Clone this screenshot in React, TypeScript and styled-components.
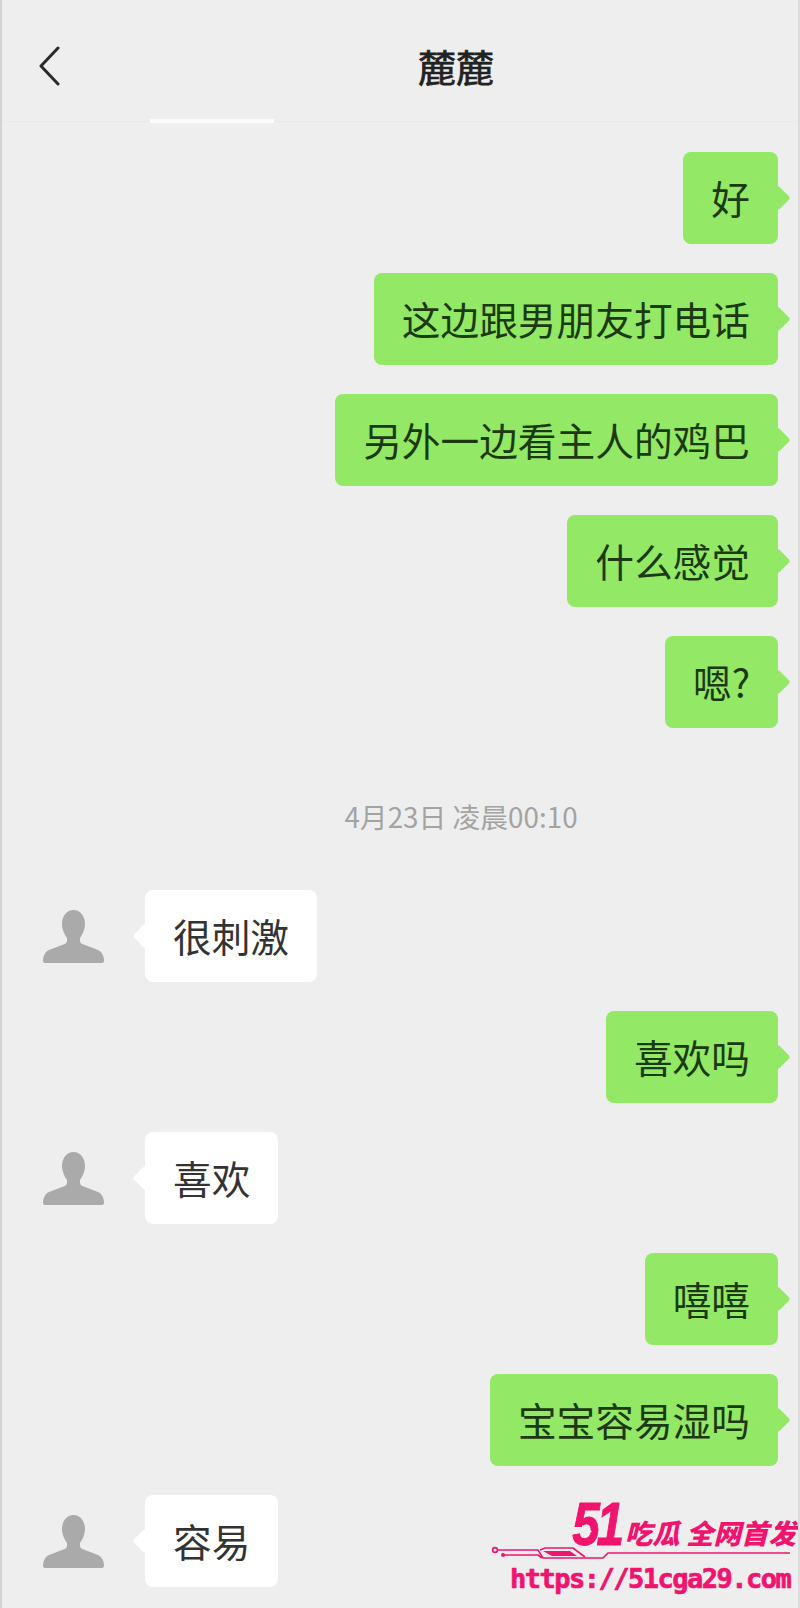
import React from 'react';
import styled, { createGlobalStyle } from 'styled-components';

const Global = createGlobalStyle`
  html, body {
    margin: 0;
    padding: 0;
    background: #eeeeee;
  }
`;

const Phone = styled.div`
  position: relative;
  width: 800px;
  height: 1608px;
  box-sizing: border-box;
  overflow: hidden;
  background: #eeeeee;
  border-left: 2px solid #d2d2d2;
  border-right: 2px solid #dcdcdc;
  font-family: "Noto Sans CJK SC", "Liberation Sans", sans-serif;
`;

const Header = styled.header`
  position: relative;
  display: flex;
  align-items: center;
  height: 122px;
  box-sizing: border-box;
  padding: 16px 0 0 36px;
  border-bottom: 1px solid #e9e9e9;
`;

const Back = styled.svg`
  width: 22px;
  height: 40px;
  margin-top: -5px;
`;

const Title = styled.h1`
  margin: -6px 0 0 358px;
  font-size: 38px;
  font-weight: 400;
  line-height: 50px;
  color: #222222;
  -webkit-text-stroke: 0.7px #222222;
`;

const Highlight = styled.span`
  position: absolute;
  left: 148px;
  bottom: -2px;
  width: 124px;
  height: 4px;
  background: #fbfbfb;
`;

const Chat = styled.main`
  display: flex;
  flex-direction: column;
  gap: 29px;
  padding-top: 30px;
`;

const Row = styled.div<{ $mine?: boolean }>`
  display: flex;
  align-items: center;
  justify-content: ${(p) => (p.$mine ? 'flex-end' : 'flex-start')};
  padding: ${(p) => (p.$mine ? '0 20px 0 0' : '0 0 0 41px')};
`;

const Avatar = styled.svg`
  width: 61px;
  height: 53px;
  margin: 20px 41px 0 0;
  align-self: flex-start;
  color: #aaaaaa;
`;

const Bubble = styled.div<{ $mine?: boolean }>`
  position: relative;
  display: flex;
  align-items: center;
  height: 92px;
  box-sizing: border-box;
  padding: 0 28px 3px;
  border-radius: 8px;
  font-size: 38.7px;
  white-space: nowrap;
  color: ${(p) => (p.$mine ? '#1c3a12' : '#333333')};
  background: ${(p) => (p.$mine ? '#93e866' : '#ffffff')};

  &::after {
    content: '';
    position: absolute;
    top: 37px;
    ${(p) => (p.$mine ? 'right: -9px;' : 'left: -9px;')}
    width: 18px;
    height: 18px;
    border-radius: 3px;
    transform: rotate(45deg);
    background: inherit;
  }
`;

const Stamp = styled.div`
  display: flex;
  align-items: center;
  justify-content: center;
  height: 104px;
  box-sizing: border-box;
  padding: 14px 0 0 122px;
  font-size: 27.8px;
  color: #a3a3a3;
`;

const Mark = styled.aside`
  position: absolute;
  right: 2px;
  bottom: 12px;
  width: 306px;
  display: flex;
  flex-direction: column;
  align-items: flex-end;
  color: #f0146e;
`;

const Brand = styled.div`
  position: relative;
  display: flex;
  align-items: flex-end;
  height: 44px;
  font-style: italic;
  font-weight: 700;
`;

const BrandNumber = styled.span`
  display: inline-block;
  font-family: "Liberation Sans", sans-serif;
  font-size: 62px;
  line-height: 44px;
  font-weight: 700;
  letter-spacing: -4px;
  margin-right: 4px;
  transform: scaleX(0.8);
  transform-origin: right center;
  -webkit-text-stroke: 1px #f0146e;
`;

const BrandText = styled.span`
  font-size: 27.5px;
  line-height: 28px;
  font-weight: 900;
  white-space: pre;
`;

const PlayMark = styled.svg`
  position: absolute;
  right: 204px;
  top: 23px;
  width: 10px;
  height: 13px;
`;

const Circuit = styled.svg`
  width: 306px;
  height: 16px;
  display: block;
`;

const Url = styled.div`
  width: 286px;
  font-family: "DejaVu Sans Mono", "Liberation Mono", monospace;
  font-size: 27px;
  line-height: 34px;
  font-weight: 700;
  letter-spacing: -1.5px;
  white-space: nowrap;
  -webkit-text-stroke: 0.7px #f0146e;
`;

type Message =
  | { kind: 'me' | 'them'; text: string }
  | { kind: 'time'; text: string };

const messages: Message[] = [
  { kind: 'me', text: '好' },
  { kind: 'me', text: '这边跟男朋友打电话' },
  { kind: 'me', text: '另外一边看主人的鸡巴' },
  { kind: 'me', text: '什么感觉' },
  { kind: 'me', text: '嗯?' },
  { kind: 'time', text: '4月23日 凌晨00:10' },
  { kind: 'them', text: '很刺激' },
  { kind: 'me', text: '喜欢吗' },
  { kind: 'them', text: '喜欢' },
  { kind: 'me', text: '嘻嘻' },
  { kind: 'me', text: '宝宝容易湿吗' },
  { kind: 'them', text: '容易' },
];

function PersonIcon() {
  return (
    <Avatar viewBox="0 0 61 53">
      <path
        fill="currentColor"
        d="M30.5 0C37 0 42 6 42 14c0 6-3 11-5 14v3c0 2 2 3 5 4l13 5c4 2 6 6 6 11 0 1-1 2-2 2H2c-1 0-2-1-2-2 0-5 2-9 6-11l13-5c3-1 5-2 5-4v-3c-2-3-5-8-5-14C19 6 24 0 30.5 0z"
      />
    </Avatar>
  );
}

export default function App() {
  return (
    <Phone>
      <Global />
      <Header>
        <Back viewBox="0 0 22 40" fill="none">
          <path d="M20 2 3 20l17 18" stroke="#2b2b2b" strokeWidth="3" strokeLinecap="round" strokeLinejoin="round" />
        </Back>
        <Title>麓麓</Title>
        <Highlight />
      </Header>
      <Chat>
        {messages.map((m, i) => {
          if (m.kind === 'time') return <Stamp key={i}>{m.text}</Stamp>;
          const mine = m.kind === 'me';
          return (
            <Row key={i} $mine={mine}>
              {!mine && <PersonIcon />}
              <Bubble $mine={mine}>{m.text}</Bubble>
            </Row>
          );
        })}
      </Chat>
      <Mark>
        <Brand>
          <BrandNumber>51</BrandNumber>
          <BrandText>吃瓜 全网首发</BrandText>
          <PlayMark viewBox="0 0 10 13">
            <path d="M0 0l10 6.5L0 13z" fill="#eeeeee" />
          </PlayMark>
        </Brand>
        <Circuit viewBox="0 0 306 16" fill="none" stroke="currentColor" strokeWidth="1.6">
          <circle cx="5" cy="4" r="2.4" />
          <path d="M7.4 4H48l5 8h60l5-5h182" />
          <path d="M50 4l5-2h28l12 9" />
          <path d="M53 5h27l7 5H62z" fill="currentColor" stroke="none" />
          <circle cx="13" cy="9" r="2" fill="currentColor" stroke="none" />
          <path d="M13 9h35l4 3" />
        </Circuit>
        <Url>https://51cga29.com</Url>
      </Mark>
    </Phone>
  );
}
